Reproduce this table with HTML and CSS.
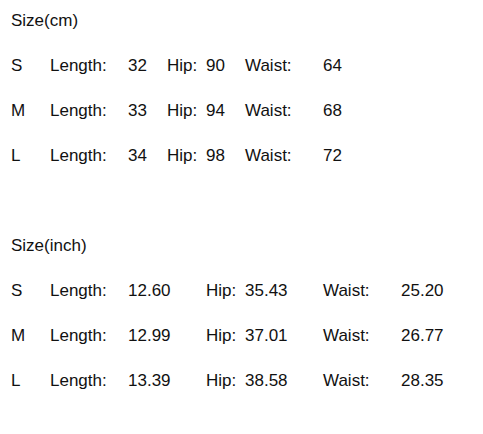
FILE: index.html
```html
<!DOCTYPE html>
<html>
<head>
<meta charset="utf-8">
<link rel="stylesheet" href="styles.css">
</head>
<body>
<div class="sheet">
  <div class="line">Size(cm)</div>
  <div class="row"><span class="c1">S</span><span class="c2">Length:</span><span class="c4">32</span><span class="c5">Hip:</span><span class="c6">90</span><span class="c7">Waist:</span><span class="c9">64</span></div>
  <div class="row"><span class="c1">M</span><span class="c2">Length:</span><span class="c4">33</span><span class="c5">Hip:</span><span class="c6">94</span><span class="c7">Waist:</span><span class="c9">68</span></div>
  <div class="row"><span class="c1">L</span><span class="c2">Length:</span><span class="c4">34</span><span class="c5">Hip:</span><span class="c6">98</span><span class="c7">Waist:</span><span class="c9">72</span></div>
  <div class="line blank"></div>
  <div class="line">Size(inch)</div>
  <div class="row"><span class="c1">S</span><span class="c2">Length:</span><span class="c4">12.60</span><span class="c6">Hip:</span><span class="c7">35.43</span><span class="c9">Waist:</span><span class="c11">25.20</span></div>
  <div class="row"><span class="c1">M</span><span class="c2">Length:</span><span class="c4">12.99</span><span class="c6">Hip:</span><span class="c7">37.01</span><span class="c9">Waist:</span><span class="c11">26.77</span></div>
  <div class="row"><span class="c1">L</span><span class="c2">Length:</span><span class="c4">13.39</span><span class="c6">Hip:</span><span class="c7">38.58</span><span class="c9">Waist:</span><span class="c11">28.35</span></div>
</div>
</body>
</html>
```
FILE: styles.css
```css
html, body {
  margin: 0;
  padding: 0;
  background: #ffffff;
}
.sheet {
  font-family: "Liberation Sans", Arial, sans-serif;
  font-size: 17px;
  color: #111111;
  padding: 9px 0 0 11px;
  display: flex;
  flex-direction: column;
  gap: 21px;
}
.line {
  line-height: 24px;
  height: 24px;
  white-space: nowrap;
}
.row {
  display: grid;
  grid-template-columns: repeat(11, 39px);
  line-height: 24px;
  height: 24px;
  white-space: nowrap;
}
.row span { grid-row: 1; }
.c1 { grid-column: 1; }
.c2 { grid-column: 2; }
.c4 { grid-column: 4; }
.c5 { grid-column: 5; }
.c6 { grid-column: 6; }
.c7 { grid-column: 7; }
.c9 { grid-column: 9; }
.c11 { grid-column: 11; }
```
